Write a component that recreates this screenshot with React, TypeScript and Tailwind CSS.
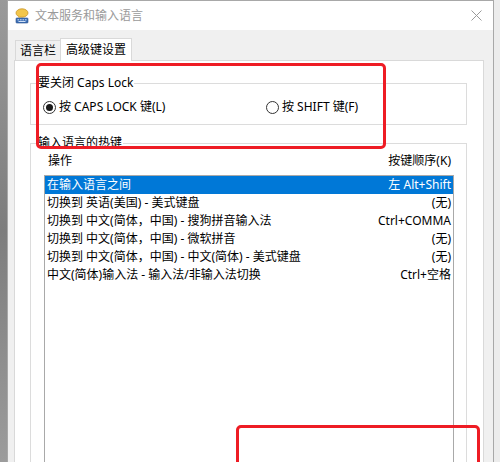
import React from "react";

function TitleIcon() {
  return (
    <svg width="14" height="16" viewBox="0 0 14 16">
      <ellipse cx="7" cy="5" rx="6" ry="4.2" fill="#f3c64a" stroke="#c9962a" strokeWidth="0.8" />
      <path d="M4 8.5 L3 10.5 L6 9" fill="#f3c64a" />
      <rect x="1" y="10" width="12" height="5" rx="0.8" fill="#3d6fb6" stroke="#2a4f8a" strokeWidth="0.6" />
      <rect x="2.5" y="11.3" width="1.6" height="1" fill="#cfe0f7" />
      <rect x="5" y="11.3" width="1.6" height="1" fill="#cfe0f7" />
      <rect x="7.5" y="11.3" width="1.6" height="1" fill="#cfe0f7" />
      <rect x="10" y="11.3" width="1.6" height="1" fill="#cfe0f7" />
      <rect x="3.5" y="13" width="7" height="1" fill="#cfe0f7" />
    </svg>
  );
}

function Radio({ checked }: { checked: boolean }) {
  return (
    <span className="flex items-center justify-center w-[13px] h-[13px] rounded-full border border-[#333333] bg-white">
      {checked && <span className="w-[7px] h-[7px] rounded-full bg-[#1a1a1a]" />}
    </span>
  );
}

const rows: [string, string][] = [
  ["在输入语言之间", "左 Alt+Shift"],
  ["切换到 英语(美国) - 美式键盘", "(无)"],
  ["切换到 中文(简体，中国) - 搜狗拼音输入法", "Ctrl+COMMA"],
  ["切换到 中文(简体，中国) - 微软拼音", "(无)"],
  ["切换到 中文(简体，中国) - 中文(简体) - 美式键盘", "(无)"],
  ["中文(简体)输入法 - 输入法/非输入法切换", "Ctrl+空格"],
];

export default function App() {
  return (
    <div className="relative flex w-[500px] h-[462px] overflow-hidden bg-[#e9e9e9] font-['Noto_Sans','Noto_Sans_CJK_SC',sans-serif] text-[12px] leading-[16px] text-black">
      <div className="w-[7px] h-full bg-gradient-to-b from-[#9a9a9a] via-[#7d7d7d] to-[#9c9c9c]" />
      <div className="flex flex-col w-[487px] h-full border-x border-t border-[#a8a8a8] bg-[#f0f0f0]">
        <div className="flex items-center h-[29px] shrink-0 bg-white pl-[7px] pr-[11px]">
          <TitleIcon />
          <span className="ml-[6px] text-[#9a9a9a]">文本服务和输入语言</span>
          <span className="flex-1" />
          <svg width="11" height="11" viewBox="0 0 11 11">
            <path d="M0.5 0.5 L10.5 10.5 M10.5 0.5 L0.5 10.5" stroke="#9a9a9a" strokeWidth="1" />
          </svg>
        </div>
        <div className="flex flex-col flex-1 pl-[6px] pr-[9px] pt-[8px]">
          <div className="flex items-end h-[22px] shrink-0">
            <div className="flex items-center h-[20px] ml-[1px] pl-[4px] pr-[4px] border border-b-0 border-[#d9d9d9] bg-[#f0f0f0]">
              语言栏
            </div>
            <div className="relative z-10 flex items-center h-[23px] -mb-px -ml-px pl-[5px] pr-[5px] border border-b-0 border-[#d9d9d9] bg-white">
              高级键设置
            </div>
          </div>
          <div className="flex flex-col flex-1 border border-[#d9d9d9] bg-white pl-[15px] pr-[16px]">
            <fieldset className="mt-[14px] border border-[#dcdcdc] px-[6px] pb-[8px]">
              <legend className="px-[1px]">要关闭 Caps Lock</legend>
              <div className="flex items-center h-[18px] mt-[7px] pl-[6px]">
                <div className="flex items-center gap-[3px] w-[223px]">
                  <Radio checked />
                  <span>按 CAPS LOCK 键(L)</span>
                </div>
                <div className="flex items-center gap-[3px]">
                  <Radio checked={false} />
                  <span>按 SHIFT 键(F)</span>
                </div>
              </div>
            </fieldset>
            <fieldset className="flex flex-col flex-1 mt-[10px] border border-[#dcdcdc] px-[6px]">
              <legend className="px-[1px]">输入语言的热键</legend>
              <div className="flex flex-col flex-1 pl-[7px] pr-[6px]">
                <div className="flex items-center justify-between h-[18px] mt-[1px] pl-[4px] pr-[3px]">
                  <span>操作</span>
                  <span>按键顺序(K)</span>
                </div>
                <div className="flex flex-col flex-1 mt-[5px] border border-[#a9a9a9] min-h-[300px]">
                  {rows.map(([a, b], i) => (
                    <div
                      key={i}
                      className={
                        i === 0
                          ? "flex items-center justify-between h-[18px] pl-[2px] pr-[2px] bg-[#0078d7] text-white"
                          : "flex items-center justify-between h-[18px] pl-[2px] pr-[2px]"
                      }
                    >
                      <span>{a}</span>
                      <span>{b}</span>
                    </div>
                  ))}
                </div>
              </div>
            </fieldset>
          </div>
        </div>
      </div>
      <div className="w-[6px] h-full bg-[#ececec]" />

      <div className="absolute left-[36px] top-[63px] w-[350px] h-[86px] border-[3px] border-[#ee1c24] rounded-[5px]" />
      <div className="absolute left-[236px] top-[425px] w-[244px] h-[60px] border-[3px] border-[#ee1c24] rounded-[5px]" />
    </div>
  );
}
